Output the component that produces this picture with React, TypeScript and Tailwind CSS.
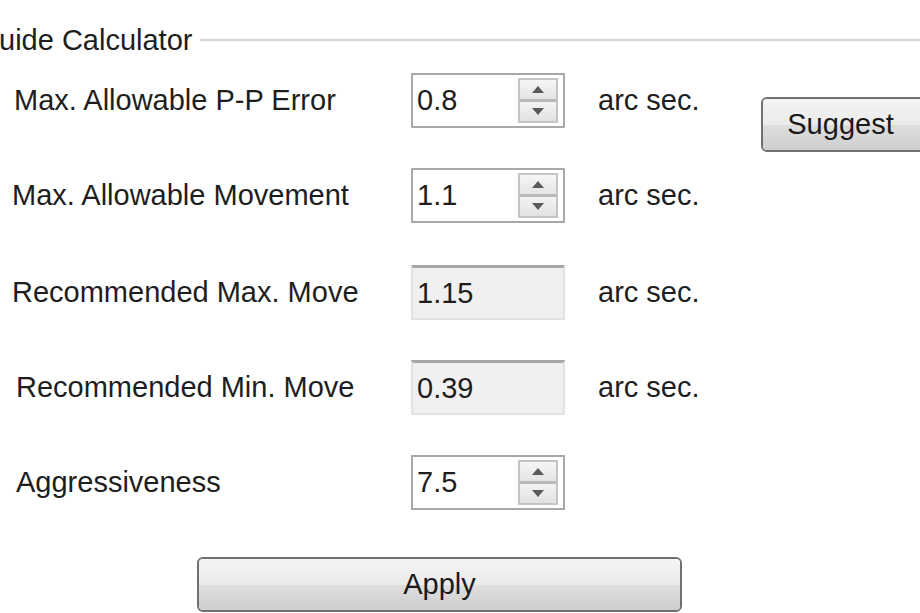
import React from "react";

const font = { fontFamily: '"Liberation Sans", Arial, sans-serif' };

function SpinBox({ value }: { value: string }) {
  return (
    <div className="flex h-[55px] w-[154px] items-center border-2 border-[#a8a8a8] bg-white pl-[4px] pr-[5px]">
      <div className="flex-1 text-[29px] leading-none text-[#1e1e1e]">{value}</div>
      <div className="flex h-[45px] w-[40px] flex-col border-2 border-[#c4c4c4] bg-[#ededed]">
        <div className="flex flex-1 items-center justify-center bg-gradient-to-b from-[#f6f6f6] to-[#e4e4e4]">
          <svg width="12" height="7" viewBox="0 0 12 7">
            <polygon points="6,0 12,7 0,7" fill="#5a5a5a" />
          </svg>
        </div>
        <div className="h-[3px] bg-[#b9b9b9]" />
        <div className="flex flex-1 items-center justify-center bg-gradient-to-b from-[#f3f3f3] to-[#e2e2e2]">
          <svg width="12" height="7" viewBox="0 0 12 7">
            <polygon points="0,0 12,0 6,7" fill="#5a5a5a" />
          </svg>
        </div>
      </div>
    </div>
  );
}

function ReadBox({ value }: { value: string }) {
  return (
    <div className="flex h-[55px] w-[154px] items-center border-2 border-t-[3px] border-[#e2e2e2] border-t-[#a6a6a6] bg-[#f0f0f0] pl-[4px]">
      <div className="text-[29px] leading-none text-[#1e1e1e]">{value}</div>
    </div>
  );
}

function Row({
  label,
  pl,
  box,
  unit,
  mt,
}: {
  label: string;
  pl: string;
  box: React.ReactNode;
  unit: boolean;
  mt: string;
}) {
  return (
    <div className={`flex h-[55px] items-center ${mt}`}>
      <div className={`w-[411px] text-[29px] leading-none text-[#1e1e1e] ${pl}`}>{label}</div>
      {box}
      {unit && <div className="ml-[33px] text-[29px] leading-none text-[#1e1e1e]">arc sec.</div>}
    </div>
  );
}

function WinButton({ label, className }: { label: string; className: string }) {
  return (
    <div
      className={`relative flex h-[55px] items-center justify-center overflow-hidden rounded-[6px] border-2 border-[#707070] ${className}`}
    >
      <div className="absolute inset-0 flex flex-col">
        <div className="flex-1 bg-gradient-to-b from-[#f4f4f4] to-[#ebebeb]" />
        <div className="flex-1 bg-gradient-to-b from-[#dedede] to-[#cfcfcf]" />
      </div>
      <div className="relative text-[29px] leading-none text-[#1a1a1a]">{label}</div>
    </div>
  );
}

export default function App() {
  return (
    <div className="h-[613px] w-[920px] overflow-hidden bg-white" style={font}>
      <div className="flex h-[28px] items-center pt-[0px] mt-[26px]">
        <div className="ml-[-1px] text-[29px] leading-none text-[#1e1e1e]">uide Calculator</div>
        <div className="ml-[8px] h-[2px] flex-1 bg-[#d4d4d4]" />
      </div>
      <div className="mt-[19px] flex">
        <div className="flex w-[761px] flex-col">
          <Row label="Max. Allowable P-P Error" pl="pl-[14px]" box={<SpinBox value="0.8" />} unit mt="" />
          <Row label="Max. Allowable Movement" pl="pl-[12px]" box={<SpinBox value="1.1" />} unit mt="mt-[40px]" />
          <Row label="Recommended Max. Move" pl="pl-[12px]" box={<ReadBox value="1.15" />} unit mt="mt-[42px]" />
          <Row label="Recommended Min. Move" pl="pl-[16px]" box={<ReadBox value="0.39" />} unit mt="mt-[40px]" />
          <Row label="Aggressiveness" pl="pl-[16px]" box={<SpinBox value="7.5" />} unit={false} mt="mt-[40px]" />
        </div>
        <div className="flex-1">
          <WinButton label="Suggest" className="mt-[24px] mr-[-40px] pr-[40px] h-[54px]" />
        </div>
      </div>
      <div className="mt-[47px] flex">
        <WinButton label="Apply" className="ml-[197px] w-[485px]" />
      </div>
    </div>
  );
}
